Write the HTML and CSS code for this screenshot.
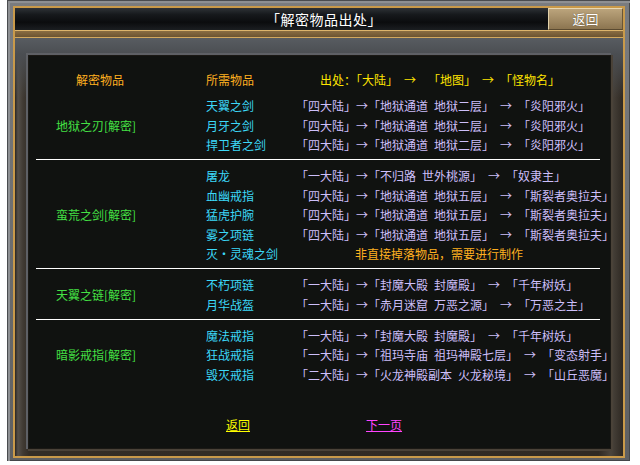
FILE: index.html
```html
<!DOCTYPE html>
<html lang="zh-CN">
<head>
<meta charset="utf-8">
<title>解密物品出处</title>
<link rel="stylesheet" href="styles.css">
</head>
<body>
<div class="win">
  <div class="gold">
    <div class="titlebar">
      <div class="title">「解密物品出处」</div>
      <div class="btn">返回</div>
    </div>
    <div class="band"></div>
    <div class="body">
      <div class="panel">
        <div class="hdr">
          <div class="h1">解密物品</div>
          <div class="h2">所需物品</div>
          <div class="h3">出处：「大陆」&ensp;→&ensp;&ensp;「地图」&ensp;→&ensp;「怪物名」</div>
        </div>

        <div class="group line">
          <div class="gname">地狱之刃[解密]</div>
          <div class="items">
            <div class="item"><div class="iname">天翼之剑</div><div class="src">「四大陆」→「地狱通道&ensp;地狱二层」&ensp;→&ensp;「炎阳邪火」</div></div>
            <div class="item"><div class="iname">月牙之剑</div><div class="src">「四大陆」→「地狱通道&ensp;地狱二层」&ensp;→&ensp;「炎阳邪火」</div></div>
            <div class="item"><div class="iname">捍卫者之剑</div><div class="src">「四大陆」→「地狱通道&ensp;地狱二层」&ensp;→&ensp;「炎阳邪火」</div></div>
          </div>
        </div>

        <div class="group line">
          <div class="gname">蛮荒之剑[解密]</div>
          <div class="items">
            <div class="item"><div class="iname">屠龙</div><div class="src">「一大陆」→「不归路&ensp;世外桃源」&ensp;→&ensp;「奴隶主」</div></div>
            <div class="item"><div class="iname">血幽戒指</div><div class="src">「四大陆」→「地狱通道&ensp;地狱五层」&ensp;→&ensp;「斯裂者奥拉夫」</div></div>
            <div class="item"><div class="iname">猛虎护腕</div><div class="src">「四大陆」→「地狱通道&ensp;地狱五层」&ensp;→&ensp;「斯裂者奥拉夫」</div></div>
            <div class="item"><div class="iname">雾之项链</div><div class="src">「四大陆」→「地狱通道&ensp;地狱五层」&ensp;→&ensp;「斯裂者奥拉夫」</div></div>
            <div class="item"><div class="iname">灭・灵魂之剑</div><div class="src note">非直接掉落物品，需要进行制作</div></div>
          </div>
        </div>

        <div class="group line">
          <div class="gname">天翼之链[解密]</div>
          <div class="items">
            <div class="item"><div class="iname">不朽项链</div><div class="src">「一大陆」→「封魔大殿&ensp;封魔殿」&ensp;→&ensp;「千年树妖」</div></div>
            <div class="item"><div class="iname">月华战盔</div><div class="src">「一大陆」→「赤月迷窟&ensp;万恶之源」&ensp;→&ensp;「万恶之主」</div></div>
          </div>
        </div>

        <div class="group">
          <div class="gname">暗影戒指[解密]</div>
          <div class="items">
            <div class="item"><div class="iname">魔法戒指</div><div class="src">「一大陆」→「封魔大殿&ensp;封魔殿」&ensp;→&ensp;「千年树妖」</div></div>
            <div class="item"><div class="iname">狂战戒指</div><div class="src">「一大陆」→「祖玛寺庙&ensp;祖玛神殿七层」&ensp;→&ensp;「变态射手」</div></div>
            <div class="item"><div class="iname">毁灭戒指</div><div class="src">「二大陆」→「火龙神殿副本&ensp;火龙秘境」&ensp;→&ensp;「山丘恶魔」</div></div>
          </div>
        </div>

        <div class="links">
          <a class="back">返回</a>
          <a class="next">下一页</a>
        </div>
      </div>
    </div>
  </div>
</div>
</body>
</html>
```

FILE: styles.css
```css
html, body {
  margin: 0;
  padding: 0;
  background: #ffffff;
}

body {
  font-family: "Noto Sans CJK SC", "Noto Sans", sans-serif;
  font-size: 12px;
}

.win {
  margin-left: 7px;
  width: 623px;
  height: 461px;
  box-sizing: border-box;
  padding: 6px 5px 3px 6px;
  background: linear-gradient(#7a7c7f, #5d5f62);
  box-shadow: inset 1px 1px 0 #4a4c4f, inset 3px 3px 0 #8e9093, inset -1px -1px 0 #444649;
}

.gold {
  height: 100%;
  box-sizing: border-box;
  border: 2px solid #c99a4a;
  display: flex;
  flex-direction: column;
  background: #111;
}

.titlebar {
  height: 22px;
  flex: none;
  display: grid;
  grid-template-columns: 75px 1fr 75px;
  background: linear-gradient(#2e3236 0%, #16191c 30%, #0b0c0e 65%, #1b1e21 100%);
}

.title {
  grid-column: 2;
  text-align: center;
  color: #ffffff;
  font-size: 14px;
  line-height: 22px;
  padding-left: 10px;
  letter-spacing: 0.5px;
}

.btn {
  grid-column: 3;
  box-sizing: border-box;
  background: linear-gradient(#bba47c, #8c7550);
  border: 1px solid;
  border-color: #e8d8b2 #6a5636 #5a4a30 #e2d2aa;
  color: #ffffff;
  font-size: 13px;
  line-height: 20px;
  text-align: center;
  text-shadow: 0 0 1px #4a3a20;
}

.band {
  height: 8px;
  flex: none;
  box-sizing: border-box;
  border-top: 1px solid #dcb46c;
  border-bottom: 1px solid #d2a85e;
  background: linear-gradient(#8a6d42, #6b5331);
}

.body {
  flex: 1;
  padding: 18px 13px 8px 14px;
  background:
    linear-gradient(to bottom, #585c61 0, #4b4e52 16px, rgba(60, 56, 50, 0) 60px),
    linear-gradient(to right, #2a2622 0, #55504a 3px, #403a33 8px, #332d26 14px, #302a23 96%, #4a443c 98%, #2e2822 100%);
}

.panel {
  height: 100%;
  box-sizing: border-box;
  background: #101210;
  box-shadow: 0 0 0 1px #1b1915, -1px -1px 0 2px #5e6065, 1px 1px 0 2px #4a4238;
  padding: 14px 10px 0 7px;
  display: flex;
  flex-direction: column;
}

.hdr {
  display: flex;
  height: 20px;
  line-height: 20px;
  white-space: nowrap;
}

.h1 {
  width: 170px;
  box-sizing: border-box;
  padding-left: 40px;
  color: #ffb020;
}

.h2 {
  width: 90px;
  color: #ffb020;
}

.h3 {
  padding-left: 24px;
  color: #ffe400;
}

.group {
  display: flex;
  align-items: center;
  padding: 6px 0 4.5px;
}

.group.line {
  border-bottom: 1px solid #ffffff;
}

.gname {
  width: 170px;
  flex: none;
  box-sizing: border-box;
  padding-left: 20px;
  color: #44e044;
  line-height: 19.5px;
}

.items {
  flex: 1;
}

.item {
  display: flex;
  height: 19.5px;
  line-height: 19.5px;
  white-space: nowrap;
}

.iname {
  width: 90px;
  flex: none;
  color: #3cd8f8;
}

.src {
  color: #cdbffa;
}

.src.note {
  margin-left: 59px;
  color: #ffb020;
}

.links {
  display: flex;
  padding-left: 190px;
  gap: 116px;
  margin-top: 26.5px;
  line-height: 20px;
}

.links a {
  text-decoration: underline;
  cursor: pointer;
}

.back {
  color: #ffff00;
}

.next {
  color: #ff44ff;
}
```
